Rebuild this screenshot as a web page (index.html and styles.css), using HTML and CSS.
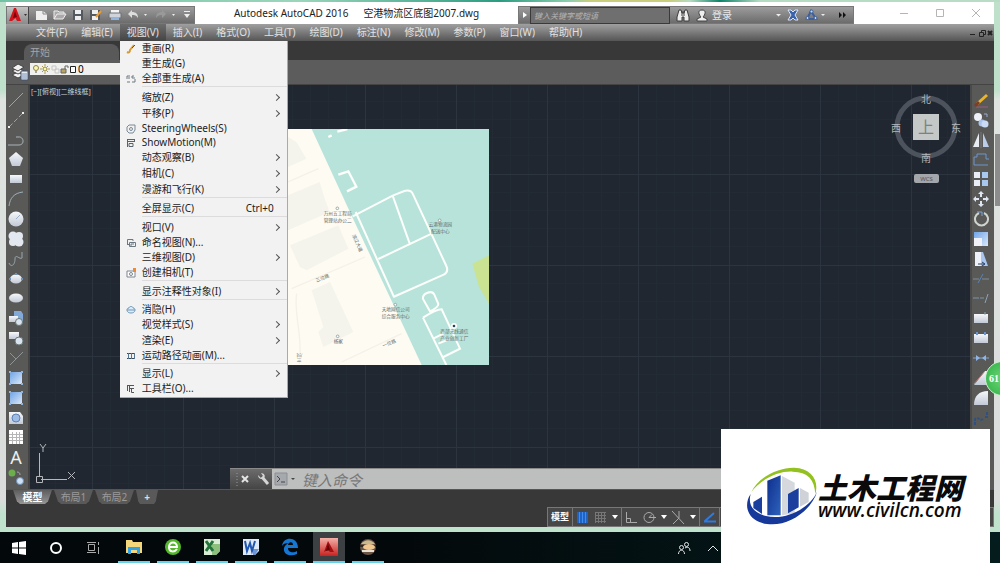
FILE: index.html
```html
<!DOCTYPE html>
<html lang="zh-CN">
<head>
    <meta charset="UTF-8">
    <meta name="viewport" content="width=device-width, initial-scale=1.0">
    <title>Autodesk AutoCAD 2016 空港物流区底图2007.dwg</title>
    <link rel="stylesheet" href="styles.css">
</head>
<body>
    <!-- Shared gradients -->
    <svg class="defs" width="0" height="0" aria-hidden="true">
        <defs>
            <linearGradient id="pale" x1="0" y1="0" x2="0" y2="1"><stop offset="0" stop-color="#f6f8fb"/><stop offset="1" stop-color="#c2c9d6"/></linearGradient>
            <linearGradient id="sky" x1="0" y1="0" x2="1" y2="1"><stop offset="0" stop-color="#6fa4e6"/><stop offset="1" stop-color="#dbe8fa"/></linearGradient>
            <linearGradient id="red" x1="0" y1="0" x2="0" y2="1"><stop offset="0" stop-color="#f3b0a8"/><stop offset="1" stop-color="#c9221f"/></linearGradient>
            <linearGradient id="tower" x1="0" y1="0" x2="1" y2="1"><stop offset="0" stop-color="#0f2f8c"/><stop offset="1" stop-color="#2d62bd"/></linearGradient>
        </defs>
    </svg>

    <div class="desktop">
        <div class="window">
            <!-- Title Bar -->
            <header class="titlebar">
                <div class="quick-access">
                    <button class="app-btn" aria-label="应用程序菜单"><svg width="20" height="16" viewBox="0 0 20 16"><path d="M1 14 6 1h2l5 13H9L7.500 11 4 14z" fill="#d3131b"/><path d="m7 4 2 6-4 1z" fill="#7c060b"/><path d="M16 7h3l-1.500 2z" fill="#333"/></svg></button>
                    <button aria-label="新建"><svg width="14" height="12" viewBox="0 0 14 12"><path d="M2 2h7l4 3v6H2z" fill="#eee"/><path d="M9 2v3h4" fill="none" stroke="#888"/></svg></button>
                    <button aria-label="打开"><svg width="14" height="12" viewBox="0 0 14 12"><path d="M1 10V2h4l1 1h5v2M1 10l3-5h9l-3 5z" fill="#aaa" stroke="#eee"/></svg></button>
                    <button aria-label="保存"><svg width="12" height="12" viewBox="0 0 12 12"><path d="M1 1h10v10H1z" fill="#54585f"/><path d="M3 1h6v4H3zM3 7h6v4H3z" fill="#eee"/></svg></button>
                    <button aria-label="另存为"><svg width="14" height="12" viewBox="0 0 14 12"><path d="M1 1h10v10H1z" fill="#54585f"/><path d="M3 1h6v4H3zM3 7h6v4H3z" fill="#eee"/><path d="m7 8 5-6" stroke="#e99a35" stroke-width="2"/></svg></button>
                    <button aria-label="打印"><svg width="14" height="12" viewBox="0 0 14 12"><path d="M3 1h8v4H3z" fill="#f4f4f4"/><path d="M1 4h12v5H1z" fill="#d0d4da" stroke="#6d7177"/><path d="M3 8h8v3H3z" fill="#8fb4dd"/></svg></button>
                    <button aria-label="放弃"><svg width="23" height="12" viewBox="0 0 23 12"><path d="m1 5 4-4v2c4 0 6 2 6 6-2-3-3-3-6-3v3z" fill="#ddd"/><path d="M17 5h3l-1.500 2z" fill="#eee"/></svg></button>
                    <button aria-label="重做"><svg width="23" height="12" viewBox="0 0 23 12"><path d="M11 5 7 1v2C3 3 1 5 1 9c2-3 3-3 6-3v3z" fill="#999"/><path d="M17 5h3l-1.500 2z" fill="#eee"/></svg></button>
                    <button aria-label="自定义"><svg width="8" height="10" viewBox="0 0 8 10"><path d="M1 1.500h6" stroke="#eee"/><path d="M1 4h6L4 8z" fill="#eee"/></svg></button>
                </div>
                <h1 class="title"><span>Autodesk AutoCAD 2016</span><span>空港物流区底图2007.dwg</span></h1>
                <div class="infocenter">
                    <button class="expand" aria-label="展开"><svg width="6" height="8" viewBox="0 0 6 8"><path d="m1 1 4 3-4 3z" fill="#fff"/></svg></button>
                    <input class="search" type="text" aria-label="搜索" placeholder="键入关键字或短语">
                    <button aria-label="查找"><svg width="14" height="13" viewBox="0 0 14 13"><path d="M3 1h2l1 3h2l1-3h2l2 7v4H8V8H6v4H1V8z" fill="#eee" stroke="#3c3c3c"/><path d="M6 2v5M8 2v5" stroke="#3c3c3c"/></svg></button>
                    <button class="login"><svg width="12" height="13" viewBox="0 0 12 13"><path d="M6 1c5 0 3 5 1 7l4 2v2H1v-2l4-2C3 6 1 1 6 1z" fill="#eee" stroke="#444"/></svg>登录</button>
                    <button class="login-more" aria-label="登录选项"><svg width="5" height="4" viewBox="0 0 5 4"><path d="M0 1h5L2.500 3.500z" fill="#eee"/></svg></button>
                    <button aria-label="交换"><svg width="12" height="12" viewBox="0 0 12 12"><path d="M1 1h3l2 2 2-2h3L8 6l3 5H8L6 9l-2 2H1l3-5z" fill="#3b62ad" stroke="#dce6f5"/></svg></button>
                    <button aria-label="连接"><svg width="20" height="12" viewBox="0 0 20 12"><path d="M6 2 2 10h9z" fill="none" stroke="#3d5f9c" stroke-width="2"/><g fill="#c9d9f2" stroke="#3d5f9c"><circle cx="6.500" cy="2.500" r="1.500"/><circle cx="2.500" cy="9" r="1.500"/><circle cx="10.500" cy="9" r="1.500"/></g><path d="M16 5h4l-2 2z" fill="#eee"/></svg></button>
                    <button class="more" aria-label="更多"><svg width="7" height="6" viewBox="0 0 7 6"><path d="m0 0 3 3-3 3zM4 0l3 3-3 3z" fill="#111"/></svg></button>
                </div>
                <div class="window-btns">
                    <button aria-label="最小化"><svg width="10" height="10" viewBox="0 0 10 10"><path d="M1 5.500h8" stroke="#b5b5b5"/></svg></button>
                    <button aria-label="最大化"><svg width="10" height="10" viewBox="0 0 10 10"><path d="M1.500 1.500h7v7h-7z" fill="none" stroke="#b5b5b5"/></svg></button>
                    <button aria-label="关闭"><svg width="10" height="10" viewBox="0 0 10 10"><path d="m1 1 8 8M9 1 1 9" stroke="#b5b5b5"/></svg></button>
                </div>
            </header>

            <!-- Menu Bar -->
            <nav class="menubar">
                <a href="#">文件(F)</a>
                <a href="#">编辑(E)</a>
                <div class="menu-open">
                    <a href="#" class="active">视图(V)</a>
                    <ul class="dropdown">
                        <li><a href="#"><svg width="10" height="10" viewBox="0 0 10 10"><path d="M1 8c2 1 3 0 3-2l4-5" fill="none" stroke="#d79a35" stroke-width="2"/><path d="m6 4 3-3" stroke="#555"/></svg><span>重画(R)</span></a></li>
                        <li><a href="#"><i></i><span>重生成(G)</span></a></li>
                        <li><a href="#"><svg width="10" height="10" viewBox="0 0 10 10"><path d="M1 5V2h3M2 4h2M9 5v3H6M8 2H6v2h3M1 8h3" fill="none" stroke="#6c7880"/></svg><span>全部重生成(A)</span></a></li>
                        <li class="divider"></li>
                        <li class="tall sub"><a href="#"><i></i><span>缩放(Z)</span></a></li>
                        <li class="tall sub"><a href="#"><i></i><span>平移(P)</span></a></li>
                        <li class="short"><a href="#"><svg width="10" height="10" viewBox="0 0 10 10"><path d="M3 1h6v5L7 9H3L1 7V3z" fill="none" stroke="#7a8a96"/><circle cx="5" cy="5" r="1.500" fill="none" stroke="#7a8a96"/></svg><span>SteeringWheels(S)</span></a></li>
                        <li class="short"><a href="#"><svg width="10" height="10" viewBox="0 0 10 10"><path d="M1 1.500h8M1.500 1v8M1 3.500h8M8.500 1v3M3 5.500h4v3H3z" fill="none" stroke="#59636b"/></svg><span>ShowMotion(M)</span></a></li>
                        <li class="tall sub"><a href="#"><i></i><span>动态观察(B)</span></a></li>
                        <li class="tall sub"><a href="#"><i></i><span>相机(C)</span></a></li>
                        <li class="tall sub"><a href="#"><i></i><span>漫游和飞行(K)</span></a></li>
                        <li class="divider"></li>
                        <li class="tall"><a href="#"><i></i><span>全屏显示(C)</span><kbd>Ctrl+0</kbd></a></li>
                        <li class="divider"></li>
                        <li class="tall sub"><a href="#"><i></i><span>视口(V)</span></a></li>
                        <li><a href="#"><svg width="10" height="10" viewBox="0 0 10 10"><path d="M1.500 7V1.500H7V3M1 6.500h2M3.500 4.500h6v4h-6zM5 8V6h3" fill="none" stroke="#6c7880"/></svg><span>命名视图(N)...</span></a></li>
                        <li class="sub"><a href="#"><i></i><span>三维视图(D)</span></a></li>
                        <li><a href="#"><svg width="10" height="10" viewBox="0 0 10 10"><path d="M1 3h8v6H1z" fill="#fff" stroke="#7b8790"/><circle cx="5" cy="6" r="1.500" fill="none" stroke="#7b8790"/><path d="M7 0h3v4H7z" fill="#ee8a35"/></svg><span>创建相机(T)</span></a></li>
                        <li class="divider"></li>
                        <li class="tall sub"><a href="#"><i></i><span>显示注释性对象(I)</span></a></li>
                        <li class="divider"></li>
                        <li><a href="#"><svg width="10" height="10" viewBox="0 0 10 10"><path d="M3 3c0-2 4-2 4 0 3 0 3 5-2 5S0 3 3 3zM1 5h8" fill="#dcecf8" stroke="#6f97b8"/></svg><span>消隐(H)</span></a></li>
                        <li class="sub"><a href="#"><i></i><span>视觉样式(S)</span></a></li>
                        <li class="tall sub"><a href="#"><i></i><span>渲染(E)</span></a></li>
                        <li><a href="#"><svg width="10" height="10" viewBox="0 0 10 10"><path d="M1 2.500h8M1 7.500h8" stroke="#37485a"/><path d="M2.500 2v6M5.500 2v6M8.500 2v6" stroke="#5a7791"/></svg><span>运动路径动画(M)...</span></a></li>
                        <li class="divider"></li>
                        <li class="sub"><a href="#"><i></i><span>显示(L)</span></a></li>
                        <li><a href="#"><svg width="10" height="10" viewBox="0 0 10 10"><path d="M1.500 1v6M3.500 1v7M1 1.500h7M4 4.500h4M5.500 4v4.500H8" fill="none" stroke="#555"/></svg><span>工具栏(O)...</span></a></li>
                    </ul>
                </div>
                <a href="#">插入(I)</a>
                <a href="#">格式(O)</a>
                <a href="#">工具(T)</a>
                <a href="#">绘图(D)</a>
                <a href="#">标注(N)</a>
                <a href="#">修改(M)</a>
                <a href="#">参数(P)</a>
                <a href="#">窗口(W)</a>
                <a href="#">帮助(H)</a>
                <div class="doc-btns">
                    <svg width="24" height="8" viewBox="0 0 24 8" fill="none" stroke="#222"><path d="M1 5.500h5M10.500 3.500h4v4h-4zM12.500 3V1.500h4v4h-2"/><path d="m19 2 4 4M23 2l-4 4" stroke-width="2"/></svg>
                </div>
            </nav>

            <div class="file-tabs"><a href="#" class="file-tab">开始</a></div>

            <!-- Layer Toolbar -->
            <div class="layer-bar">
                <button aria-label="图层特性"><svg width="18" height="18" viewBox="0 0 18 18"><g fill="#f2f2f2" stroke="#444"><path d="m1 12 6-3 6 3-6 3z"/><path d="m1 8 6-3 6 3-6 3z"/><path d="m1 5 6-4 6 3-6 4z"/></g><path d="M10 8h7v9h-7z" fill="#e8edf5" stroke="#44556e"/><path d="M11 11h5M11 13h5M11 15h5" stroke="#7890b5"/></svg></button>
                <div class="layer-box">
                    <svg width="44" height="10" viewBox="0 0 44 10"><circle cx="4" cy="4" r="2.500" fill="#fdf7b5" stroke="#8d8448"/><path d="M3 8h2" stroke="#555"/><circle cx="13" cy="5" r="2" fill="#fff6a0" stroke="#8d8448"/><path d="M13 0v2M13 8v2M8 5h2M16 5h2M10 2l1 1M16 8l-1-1M10 8l1-1M16 2l-1 1" stroke="#a89a50"/><path d="M20 2h4v4h-4zM23 5h4v4h-4z" fill="none" stroke="#c5c5c5"/><path d="M29 5h5v4h-5z" fill="#b9a561" stroke="#666"/><path d="M33 5V2h3v2" fill="none" stroke="#666"/><path d="M38.500 2.500h5v6h-5z" fill="#fff" stroke="#222"/></svg>
                    <select aria-label="图层"><option>0</option></select>
                </div>
            </div>

            <!-- Workspace -->
            <main class="workspace">
                <div class="tools">
                    <button aria-label="直线"><svg viewBox="0 0 16 16"><path d="M1 15 15 1" stroke="#95a5ac"/></svg></button>
                    <button aria-label="构造线"><svg viewBox="0 0 16 16"><path d="M1 15 15 1" stroke="#9aa5aa" stroke-dasharray="5 2"/><path d="M0 14h2v2H0zM14 0h2v2h-2z" fill="#eee"/></svg></button>
                    <button aria-label="多段线"><svg viewBox="0 0 16 16"><path d="M0 13h11c6 0 5-9-1-8H8" fill="none" stroke="#aab4ba"/></svg></button>
                    <button aria-label="多边形"><svg viewBox="0 0 16 16"><path d="m8 1 7 6-3 8H4L1 7z" fill="url(#pale)"/></svg></button>
                    <button aria-label="矩形"><svg viewBox="0 0 16 16"><path d="M2 4h12v8H2z" fill="url(#pale)"/></svg></button>
                    <button aria-label="圆弧"><svg viewBox="0 0 16 16"><path d="M1 15C2 7 6 2 15 1" fill="none" stroke="#9db0bb"/></svg></button>
                    <button aria-label="圆"><svg viewBox="0 0 16 16"><circle cx="8" cy="8" r="7.500" fill="url(#pale)"/><path d="m8 8 4-4" stroke="#9bb1cf"/></svg></button>
                    <button aria-label="修订云线"><svg viewBox="0 0 16 16"><g fill="#e3e7ef"><circle cx="5" cy="5" r="4.500"/><circle cx="11" cy="5" r="4"/><circle cx="5" cy="11" r="4"/><circle cx="11" cy="11" r="4.500"/></g></svg></button>
                    <button aria-label="样条曲线"><svg viewBox="0 0 16 16"><path d="M1 12c2 5 6 2 6-4s5 1 7-1V1" fill="none" stroke="#98a6ae"/></svg></button>
                    <button aria-label="椭圆"><svg viewBox="0 0 16 16"><ellipse cx="8" cy="8" rx="6" ry="4.500" fill="url(#pale)"/><path d="M1 8h2M13 8h2M8 2v2" stroke="#6d91b8" stroke-width="2"/></svg></button>
                    <button aria-label="椭圆弧"><svg viewBox="0 0 16 16"><ellipse cx="8" cy="8" rx="7" ry="4.500" fill="url(#pale)"/></svg></button>
                    <button aria-label="插入块"><svg viewBox="0 0 16 16"><path d="M6 1h7l2 3v7H6z" fill="#83a9d8"/><path d="M1 6h9v6H1z" fill="url(#pale)"/><circle cx="11" cy="12" r="3.500" fill="#dbe3ee" stroke="#677"/></svg></button>
                    <button aria-label="创建块"><svg viewBox="0 0 16 16"><path d="M1 2h10v7H1z" fill="url(#pale)"/><circle cx="11" cy="11" r="4" fill="#dbe3ee" stroke="#677"/></svg></button>
                    <button aria-label="点"><svg viewBox="0 0 16 16"><path d="M2 15 15 2M2 3l6 6" stroke="#8d9497"/></svg></button>
                    <button aria-label="图案填充"><svg viewBox="0 0 16 16"><path d="M2 2h12v12H2z" fill="url(#sky)"/><path d="M1 1h2v2H1zM13 1h2v2h-2zM1 13h2v2H1zM13 13h2v2h-2z" fill="#8fb3df"/></svg></button>
                    <button aria-label="渐变色"><svg viewBox="0 0 16 16"><path d="M2 2h12v12H2z" fill="url(#sky)"/><path d="M1 1h2v2H1zM13 1h2v2h-2zM1 13h2v2H1zM13 13h2v2h-2z" fill="#8fb3df"/></svg></button>
                    <button aria-label="面域"><svg viewBox="0 0 16 16"><path d="M1 2h11l3 4v8H1z" fill="url(#pale)"/><circle cx="8" cy="8" r="4" fill="#9ebce4" stroke="#5d82b8"/></svg></button>
                    <button aria-label="表格"><svg viewBox="0 0 16 16"><path d="M1 1h14v14H1z" fill="#fff"/><path d="M1 5.500h14M1 8.500h14M1 11.500h14M4.500 3v12M8.500 3v12M11.500 3v12" stroke="#b5b5b5"/></svg></button>
                    <button aria-label="多行文字" class="text-tool">A</button>
                    <button aria-label="添加选定对象"><svg viewBox="0 0 16 16"><circle cx="4" cy="4" r="3.500" fill="#6cae4c"/><circle cx="12" cy="12" r="3.500" fill="#cfe1f5" stroke="#6b8fb5"/><path d="M9 3c2 0 3 1 3 3" fill="none" stroke="#aaa"/></svg></button>
                </div>

                <div class="canvas">
                    <p class="viewport-label">[−][俯视][二维线框]</p>

                    <svg class="map" viewBox="9 26 603 708" role="img" aria-label="空港物流区底图">
                        <path d="M9 26h603v708H9z" fill="#b8e3db"/>
                        <path d="M9 26h71l120 260 210 448H9z" fill="#fdfbf2"/>
                        <g fill="#f5f4ec"><path d="M9 50l25 15 30 50-55 25zM9 225l95-40 15 50 15 40-125 55zM15 375l145-60 30 70-125 65-20-10zM80 510l55-25 70 150-90 45-15-45 15-15z"/></g>
                        <g fill="none" stroke="#f5f1e8" stroke-width="4"><path d="M9 185 100 145M20 505l220-95M170 725l180-85M35 520c-10 60 20 130 8 210"/></g>
                        <path d="m612 405-50 25 20 70 30 50z" fill="#c9e392"/>
                        <g fill="none" stroke="#fdfffa" stroke-width="6">
                            <path d="m203 288 120-62 35-14q20-5 26 10l100 215q8 18-8 26L325 530M212 275l115 255M323 226l52 146M280 416l160-76"/>
                            <path d="m160 163 30-10 24 46-28 14M130 50l10-5M157 34l30-8" stroke-width="7"/>
                            <path d="m414 536q-2-12 12-18 16-7 22 5l12 28q0 10-25 22zM414 592q40-25 56-25l55 118-50 25M414 592l70 142M445 655l35-18M460 670l30-12"/>
                        </g>
                        <g class="map-text" text-anchor="middle">
                            <text x="158" y="284">万州五工程局</text><text x="158" y="304">管理站办公二</text>
                            <text x="466" y="318">云港物流园</text><text x="466" y="338">配送中心</text>
                            <text x="332" y="572">天地网信公司</text><text x="332" y="592">综合服务中心</text>
                            <text x="508" y="638">西部无线通信</text><text x="508" y="658">产业创新工厂</text>
                            <text x="160" y="668">杨家</text>
                            <text x="112" y="478" transform="rotate(-22 112 472)">三位路</text>
                            <text x="312" y="674" transform="rotate(-22 312 668)">一位路</text>
                            <text x="218" y="374" transform="rotate(65 218 368)">滨江大道</text>
                            <text x="45" y="718" transform="rotate(90 45 712)">江川</text>
                        </g>
                        <g fill="#fff" stroke="#788" stroke-width="2"><circle cx="157" cy="264" r="4"/><circle cx="464" cy="300" r="4"/><circle cx="331" cy="553" r="4"/><circle cx="158" cy="648" r="4"/></g>
                        <circle cx="507" cy="617" r="9" fill="#fff"/><circle cx="507" cy="617" r="4" fill="#245"/>
                    </svg>

                    <!-- View cube -->
                    <div class="viewcube">
                        <svg width="70" height="70" viewBox="0 0 70 70"><circle cx="35" cy="35" r="29" fill="none" stroke="#4c535d" stroke-width="5"/></svg>
                        <span class="face">上</span>
                        <span class="north">北</span><span class="south">南</span><span class="west">西</span><span class="east">东</span>
                    </div>
                    <button class="wcs">WCS</button>

                    <svg class="ucs" width="44" height="42" viewBox="0 0 44 42" fill="none" stroke="#b4b8bc"><path d="M5.500 34V10M7 36.500h26M2.500 33.500h6v6h-6zM6 1l3 4 3-4M9 5v4M34 29l7 7M41 29l-7 7"/></svg>

                    <!-- Command line -->
                    <div class="command">
                        <div class="command-grip">
                            <svg width="36" height="16" viewBox="0 0 36 16"><path d="M2 2v13" stroke="#999" stroke-dasharray="1 2"/><path d="m7 5 6 6M13 5l-6 6" stroke="#e4e4e4" stroke-width="2"/><path d="m27 6 6 7" stroke="#d5d5d5" stroke-width="3"/><path d="M23 4c0 4 4 5 6 3s0-5-3-5l2 3-2 2z" fill="#d5d5d5"/></svg>
                        </div>
                        <svg width="22" height="14" viewBox="0 0 22 14"><path d="M1 1h12v12H1z" fill="#a5a9ae" stroke="#8b8f94"/><path d="m3 4 3 3-3 3M7 10h4" fill="none" stroke="#444"/><path d="M17 6h4l-2 2z" fill="#444"/></svg>
                        <input type="text" aria-label="命令行" placeholder="键入命令">
                    </div>
                </div>

                <div class="tools tools-right">
                    <button aria-label="删除"><svg viewBox="0 0 16 16"><path d="M3 15h12" stroke="#9a5a86"/><path d="m4 12 10-9" stroke="#e8b52d" stroke-width="3"/><path d="m2 14 4-4" stroke="#7c3f26" stroke-width="3"/></svg></button>
                    <button aria-label="复制"><svg viewBox="0 0 16 16"><circle cx="5" cy="5" r="4" fill="#eef1f7"/><circle cx="9" cy="11" r="3.500" fill="#a9c3ea"/><circle cx="12" cy="12" r="3.500" fill="#c9dbf5"/><path d="M11 2h3v3" fill="none" stroke="#9ac"/></svg></button>
                    <button aria-label="镜像"><svg viewBox="0 0 16 16"><path d="M6 1v14H0z" fill="#e9ecf2"/><path d="M10 1v14h6z" fill="#b9cdea"/><path d="M8 0v16" stroke="#777"/></svg></button>
                    <button aria-label="偏移"><svg viewBox="0 0 16 16"><path d="M1 14V6h3V3h9v5h3M1 14h14" fill="none" stroke="#6d95cb"/></svg></button>
                    <button aria-label="阵列"><svg viewBox="0 0 16 16"><path d="M1 1h6v6H1zM1 9h6v6H1z" fill="#e9edf5"/><path d="M9 1h6v6H9zM9 9h6v6H9z" fill="#a9c8f0"/></svg></button>
                    <button aria-label="移动"><svg viewBox="0 0 16 16"><path d="m8 0 3 3H9v3H7V3H5zM8 16l-3-3h2v-3h2v3h2zM0 8l3-3v2h3v2H3v2zM16 8l-3 3V9h-3V7h3V5z" fill="#dde6f2"/></svg></button>
                    <button aria-label="旋转"><svg viewBox="0 0 16 16"><path d="M6 2a6.500 6.500 0 1 0 5 0" fill="none" stroke="#cfd4cf" stroke-width="2"/><path d="M4 1h5v4" fill="none" stroke="#7da4d8"/></svg></button>
                    <button aria-label="缩放"><svg viewBox="0 0 16 16"><path d="M1 1h14v14H1z" fill="url(#sky)"/><path d="M1 7h8v8H1z" fill="#f0f2f7"/></svg></button>
                    <button aria-label="拉伸"><svg viewBox="0 0 16 16"><path d="M2 1h8l5 14H2z" fill="#a8c6ee"/><path d="M2 1h6v14H2z" fill="#eef1f7"/><path d="M5 13h6M9 11l3 2-3 2" fill="none" stroke="#2c3e63"/></svg></button>
                    <button aria-label="修剪"><svg viewBox="0 0 16 16"><path d="M0 8h6M9 8h7" stroke="#7f8a98"/><path d="m5 12 5-9" stroke="#5b82b5"/></svg></button>
                    <button aria-label="延伸"><svg viewBox="0 0 16 16"><path d="M0 8h11" stroke="#7f93a8" stroke-dasharray="6 1"/><path d="m12 13 3-9" stroke="#8fa1b5"/></svg></button>
                    <button aria-label="打断于点"><svg viewBox="0 0 16 16"><path d="M1 4h14v9H1z" fill="url(#pale)"/><path d="M12 2v3" stroke="#8ab"/></svg></button>
                    <button aria-label="打断"><svg viewBox="0 0 16 16"><path d="M1 4h14v9H1z" fill="url(#pale)"/><path d="M4 2v3M12 2v3" stroke="#6d95cb" stroke-width="2"/></svg></button>
                    <button aria-label="合并"><svg viewBox="0 0 16 16"><path d="M0 8h16" stroke="#7fa3d2"/><path d="m3 5 4 3-4 3zM13 5 9 8l4 3z" fill="#8fb5e8"/></svg></button>
                    <button aria-label="倒角"><svg viewBox="0 0 16 16"><path d="M1 15 12 1h3v14z" fill="url(#pale)"/><path d="M1 14 12 1" stroke="#b77"/></svg></button>
                    <button aria-label="圆角"><svg viewBox="0 0 16 16"><path d="M1 15C1 6 6 1 15 1v14z" fill="url(#pale)"/></svg></button>
                    <button aria-label="光顺曲线"><svg viewBox="0 0 16 16"><path d="M2 15V9c5-3 4 3 8 0M14 2v5h-3" fill="none" stroke="#31517c" stroke-width="2" stroke-dasharray="3 1"/></svg></button>
                </div>
            </main>

            <!-- Layout tabs and status bar -->
            <footer class="bottom">
                <div class="layout-tabs">
                    <a href="#" class="active">模型</a>
                    <a href="#">布局1</a>
                    <a href="#">布局2</a>
                    <a href="#" class="plus">+</a>
                </div>
                <div class="statusbar">
                    <button class="model">模型</button>
                    <div class="status-group">
                        <button aria-label="栅格"><svg width="13" height="13" viewBox="0 0 13 13"><path d="M1 1h11v11H1z" fill="#1f63c4"/><path d="M3.500 1v11M6.500 1v11M9.500 1v11" stroke="#3f8cf0"/></svg></button>
                        <button aria-label="捕捉"><svg width="13" height="13" viewBox="0 0 13 13"><path d="M1 1.500h11M1 4.500h11M1 7.500h11M1 10.500h11" stroke="#777"/><path d="M1.500 1v11M4.500 1v11M7.500 1v11M10.500 1v11" stroke="#777"/></svg></button>
                        <button aria-label="捕捉设置"><svg width="6" height="4" viewBox="0 0 6 4"><path d="M0 0h6L3 4z" fill="#fff"/></svg></button>
                    </div>
                    <div class="status-group">
                        <button aria-label="正交"><svg width="13" height="13" viewBox="0 0 13 13"><path d="M1.500 1v10.500H12M1 7.500h4.500V11" fill="none" stroke="#aaa"/></svg></button>
                        <button aria-label="极轴"><svg width="13" height="13" viewBox="0 0 13 13"><circle cx="6" cy="6.500" r="5" fill="none" stroke="#aaa"/><path d="M6 6.500h7M6 6.500l3-3" stroke="#aaa"/></svg></button>
                        <button aria-label="极轴设置"><svg width="6" height="4" viewBox="0 0 6 4"><path d="M0 0h6L3 4z" fill="#fff"/></svg></button>
                        <button aria-label="等轴测"><svg width="13" height="15" viewBox="0 0 13 15"><path d="m0 1 12 13M7 1v7M7 8l-6 6" fill="none" stroke="#aaa"/></svg></button>
                        <button aria-label="等轴测设置"><svg width="6" height="4" viewBox="0 0 6 4"><path d="M0 0h6L3 4z" fill="#fff"/></svg></button>
                    </div>
                    <div class="status-group">
                        <button aria-label="对象捕捉追踪"><svg width="13" height="13" viewBox="0 0 13 13"><path d="M1 10.500h12M2 10l9-8" stroke="#2b7be4" stroke-width="2"/></svg></button>
                    </div>
                </div>
            </footer>
        </div>
    </div>

    <!-- Taskbar -->
    <div class="taskbar">
        <button class="plain" aria-label="开始"><svg width="14" height="14" viewBox="0 0 14 14"><path d="m0 2 6-1v5.500H0zM7 1l7-1v6.500H7zM0 7.500h6V13l-6-1zM7 7.500h7V14l-7-1z" fill="#fff"/></svg></button>
        <button class="plain" aria-label="搜索"><svg width="14" height="14" viewBox="0 0 14 14"><circle cx="7" cy="7" r="5" fill="none" stroke="#fff" stroke-width="2"/></svg></button>
        <button class="plain" aria-label="任务视图"><svg width="14" height="14" viewBox="0 0 14 14"><path d="M2.500 3.500h6v6h-6zM1 1.500h9M1 11.500h9M12.500 1v3M12.500 6v7" fill="none" stroke="#aaa"/></svg></button>
        <div class="apps">
            <button aria-label="文件资源管理器"><svg width="18" height="16" viewBox="0 0 18 16"><path d="M1 1h6l1 2h9v11H1z" fill="#f5d77b"/><path d="M3 15V8h12v7h-3v-4H6v4z" fill="#2fa2e8"/></svg></button>
            <button aria-label="360浏览器"><svg width="18" height="18" viewBox="0 0 18 18"><circle cx="9" cy="9" r="8" fill="#55b82c"/><path d="M5 9h8c0-6-8-6-8 0s6 5 8 2" fill="none" stroke="#fff" stroke-width="2"/></svg></button>
            <button aria-label="Excel"><svg width="18" height="18" viewBox="0 0 18 18"><path d="M1 1h16v12l-4 4H1z" fill="#d9ecd4"/><path d="M9 6h8v7l-4 4H9z" fill="#8cc07c"/><path d="m3 3 7 10M10 3 3 13" stroke="#23743a" stroke-width="3"/></svg></button>
            <button aria-label="Word"><svg width="18" height="18" viewBox="0 0 18 18"><path d="M1 1h16v12l-4 4H1z" fill="#dfe8f7"/><path d="M11 11h6l-4 6h-2z" fill="#6c96d6"/><path d="m3 3 2 10 3-8 2 8 3-10" fill="none" stroke="#1f56b0" stroke-width="2"/></svg></button>
            <button aria-label="Edge"><svg width="18" height="18" viewBox="0 0 18 18"><path d="M1 8C2-2 17-2 17 10H7c0 5 6 5 9 3v3C10 19 2 17 3 10c1-3 3-4 5-5-4 0-6 1-7 3zM7 7h5c0-4-5-3-5 0z" fill="#1577d3"/></svg></button>
            <button class="active" aria-label="AutoCAD"><svg width="18" height="18" viewBox="0 0 18 18"><path d="M0 0h18v18H0z" fill="url(#red)"/><path d="m8 3 6 11h-4l-2-2-4 2z" fill="#a50f12"/><path d="m8 6 2 6-4 1z" fill="#5f0406"/></svg></button>
            <button aria-label="游戏"><svg width="18" height="18" viewBox="0 0 18 18"><circle cx="9" cy="9" r="8" fill="#6b5445"/><path d="M2 6c4-5 10-5 14 0z" fill="#c9b98e"/><path d="M1 7h16v2H1z" fill="#2f2620"/><ellipse cx="10" cy="9" rx="6" ry="3" fill="#f0c88f"/><path d="M3 13h12" stroke="#e8e2d4" stroke-width="2"/></svg></button>
        </div>
        <div class="tray">
            <svg width="14" height="14" viewBox="0 0 14 14" fill="none" stroke="#e6e6e6"><circle cx="4.500" cy="6.500" r="2"/><path d="M1.500 13c0-5 6-5 6 0"/><circle cx="9.500" cy="3.500" r="2"/><path d="M8 7c3-2 5 0 5 3"/></svg>
            <svg width="12" height="8" viewBox="0 0 12 8" fill="none" stroke="#e6e6e6"><path d="m1 7 5-5 5 5"/></svg>
        </div>
    </div>

    <div class="speed-ball">61</div>

    <!-- Site badge -->
    <div class="site-badge">
        <svg width="72" height="60" viewBox="0 0 216 180"><path d="M22 108 48 92v52l-26-18z" fill="#1a3f9c"/><path d="m64 44 40-16v120H64z" fill="url(#tower)"/><path d="m108 30 38 20v92l-38 6z" fill="#d5d8dc"/><path d="m126 84 32-18v58l-32 18z" fill="#1a3f9c"/><path d="m162 66 26 14v28l-26 14z" fill="#cfd3d8"/><path d="M16 78C40 30 100 4 145 5c50 3 75 35 63 80-2-45-23-67-68-68C100 15 50 35 16 78z" fill="#93c120"/><path d="M14 84C-4 110-2 150 40 168c70 27 155-28 174-93-19 50-94 90-154 75-40-10-55-35-46-66z" fill="#15389a"/></svg>
        <div class="site-text">
            <strong>土木工程网</strong>
            <span>www.civilcn.com</span>
        </div>
    </div>
</body>
</html>
```

FILE: styles.css
```css
* {
    box-sizing: border-box;
}

body {
    margin: 0;
    position: relative;
    display: flex;
    flex-direction: column;
    min-height: 100vh;
    overflow: hidden;
    font-family: "Noto Sans", "Noto Sans CJK SC", sans-serif;
    font-size: 10px;
    line-height: 14px;
    background-color: #03090b;
}

a {
    color: inherit;
    text-decoration: none;
}

button {
    display: flex;
    align-items: center;
    justify-content: center;
    padding: 0;
    border: none;
    background: none;
    color: inherit;
    font: inherit;
}

svg {
    display: block;
    flex-shrink: 0;
}

.defs {
    position: absolute;
}

.desktop {
    flex: 1;
    display: flex;
    padding: 2px 6px 5px;
    background:
        linear-gradient(90deg, #6fc3a4, #9bd6bb 30%, #2c9c80 50%, #8fcfb0 57%, #c9cf7c 59%, #c9cf7c 67%, #b5dcc3 69%, #0c8468 72%, #b5dcc3 76%, #b9dcc6) top / 100% 2px no-repeat,
        linear-gradient(#8c8c8c, #8c8c8c) right 134px / 5px 72px no-repeat,
        linear-gradient(#bfe0cb 90px, #dfe3e0 100px, #d9dcda 500px, #bfe3cd 515px);
}

.window {
    flex: 1;
    display: flex;
    flex-direction: column;
    min-width: 0;
    background-color: #383838;
}

/* Title bar */
.titlebar {
    display: flex;
    height: 22px;
    padding-top: 4px;
    background-color: #fff;
}

.quick-access,
.infocenter {
    display: flex;
    align-items: center;
    background: linear-gradient(#9c9c9c, #6c6c6c);
    border: 1px solid #777;
}

.quick-access {
    gap: 5px;
    padding-right: 3px;
}

.app-btn {
    width: 22px;
    height: 17px;
    background: linear-gradient(#c4c4c4, #8a8a8a);
    border-right: 1px solid #444;
}

.title {
    flex: 1;
    display: flex;
    justify-content: center;
    gap: 15px;
    margin: 0;
    font-size: 10px;
    font-weight: normal;
    color: #222;
    white-space: nowrap;
}

.infocenter {
    gap: 6px;
    color: #e8e8e8;
}

.expand {
    width: 11px;
}

.search {
    width: 140px;
    height: 17px;
    margin-left: -6px;
    padding: 0 3px;
    border: 1px solid #3a3a3a;
    background-color: #6f6f6f;
    color: #ddd;
    font: italic 8px "Noto Sans", "Noto Sans CJK SC", sans-serif;
}

.search::placeholder {
    color: #b4b4b4;
}

.login {
    gap: 4px;
}

.login-more {
    margin-left: 38px;
}

.more {
    width: 22px;
}

.window-btns {
    display: flex;
    padding-left: 32px;
}

.window-btns button {
    width: 36px;
    height: 14px;
}

/* Menu bar */
.menubar {
    display: flex;
    height: 17px;
    padding-left: 23px;
    line-height: 17px;
    color: #e2e2e2;
    background: linear-gradient(#a0a0a0, #555);
    white-space: nowrap;
}

.menubar > a,
.menu-open > a {
    display: block;
    padding: 0 7px;
}

.menu-open {
    position: relative;
}

.menubar .active {
    background: linear-gradient(#6d6d6d, #444);
}

.doc-btns {
    margin-left: auto;
    padding: 5px 1px;
}

.dropdown {
    position: absolute;
    z-index: 5;
    top: 100%;
    left: 0;
    width: 168px;
    margin: 0;
    padding: 0 0 1px;
    list-style: none;
    color: #1c1c1c;
    background-color: #f2f2f2;
    border-right: 1px solid #aaa;
    border-bottom: 1px solid #aaa;
}

.dropdown a {
    display: grid;
    grid-template-columns: 10px 1fr auto;
    gap: 6px;
    align-items: center;
    height: 15px;
    padding: 0 6px;
    line-height: 15px;
}

.dropdown .tall a {
    height: 16px;
}

.dropdown .short a {
    height: 14px;
}

.dropdown kbd {
    padding-right: 7px;
    font: inherit;
}

.dropdown .sub a::after {
    content: "";
    width: 4px;
    height: 4px;
    margin-right: 2px;
    border-top: 1px solid #555;
    border-right: 1px solid #555;
    transform: rotate(45deg);
}

.divider {
    height: 3px;
    margin-left: 22px;
    border-top: 1px solid #dcdcdc;
}

/* File tabs and layer toolbar */
.file-tabs {
    height: 19px;
    padding: 3px 18px 0;
}

.file-tab {
    display: block;
    width: 95px;
    height: 16px;
    padding-left: 6px;
    line-height: 16px;
    color: #a5a5a5;
    background-color: #595959;
    border-radius: 8px 8px 0 0;
}

.layer-bar {
    display: flex;
    gap: 1px;
    height: 25px;
    padding: 3px 5px;
    background-color: #5c5c5c;
    border-bottom: 1px solid #444;
}

.layer-box {
    display: flex;
    align-items: center;
    width: 150px;
    height: 12px;
    padding-left: 2px;
    background-color: #f0f0ee;
}

.layer-box select {
    flex: 1;
    padding: 0 2px;
    border: none;
    appearance: none;
    background: none;
    font: inherit;
}

/* Workspace */
.workspace {
    flex: 1;
    display: flex;
    min-height: 0;
}

.tools {
    display: grid;
    grid-template-rows: repeat(20, 1fr);
    width: 24px;
    padding: 5px 4px 2px 2px;
    background-color: #595a58;
    border-right: 2px solid #444;
}

.tools button {
    min-height: 0;
}

.tools svg {
    width: 16px;
    height: 16px;
}

.tools-right {
    padding: 5px 5px 2px 1px;
    border-right: none;
    border-left: 2px solid #4a4a4a;
}

.text-tool {
    color: #eee;
    font-size: 18px;
    line-height: 18px;
}

.canvas {
    flex: 1;
    position: relative;
    background-color: #202731;
    background-image:
        linear-gradient(90deg, #2b343f 1px, transparent 1px),
        linear-gradient(#2b343f 1px, transparent 1px),
        linear-gradient(90deg, transparent 18px, #222a34 18px 19px, transparent 19px 36px, #222a34 36px 37px, transparent 37px 54px, #222a34 54px 55px, transparent 55px 72px, #222a34 72px 73px, transparent 73px),
        linear-gradient(transparent 18px, #222a34 18px 19px, transparent 19px 36px, #222a34 36px 37px, transparent 37px 54px, #222a34 54px 55px, transparent 55px 72px, #222a34 72px 73px, transparent 73px);
    background-size: 91px 91px;
    background-position: 62px 89px;
}

.viewport-label {
    margin: 0;
    padding-left: 1px;
    font-size: 7px;
    color: #d0d0d0;
}

.map {
    position: absolute;
    left: 258px;
    top: 44px;
    width: 201px;
    height: 236px;
}

.map-text {
    font-size: 14px;
    fill: #5f6a6a;
}

.viewcube {
    position: absolute;
    top: 7px;
    right: 9px;
    width: 70px;
    height: 70px;
    color: #b3b7bb;
}

.viewcube span {
    position: absolute;
}

.viewcube .face {
    top: 22px;
    left: 22px;
    width: 26px;
    height: 26px;
    font-size: 16px;
    line-height: 26px;
    text-align: center;
    color: #7c8282;
    background-color: #c4c8c6;
}

.north {
    top: 0;
    left: 30px;
}

.south {
    bottom: -3px;
    left: 30px;
}

.west {
    top: 29px;
    left: 0;
}

.east {
    top: 29px;
    right: 0;
}

.wcs {
    position: absolute;
    top: 89px;
    right: 31px;
    width: 25px;
    height: 9px;
    border-radius: 2px;
    color: #555;
    background-color: #a3a6ab;
    font-size: 6px;
    line-height: 8px;
}

.ucs {
    position: absolute;
    left: 4px;
    bottom: 4px;
}

.command {
    position: absolute;
    right: 0;
    bottom: 0;
    left: 200px;
    display: flex;
    align-items: center;
    gap: 6px;
    height: 21px;
    background-color: #bdbebe;
    border-top: 1px solid #8a8a8a;
}

.command-grip {
    display: flex;
    align-items: center;
    height: 20px;
    margin-right: -4px;
    padding: 0 1px 0 5px;
    background: linear-gradient(#6c6c6c, #454545);
}

.command input {
    flex: 1;
    height: 20px;
    padding: 0;
    border: none;
    background: none;
    font: italic 15px "Noto Sans CJK SC", sans-serif;
}

.command input::placeholder {
    color: #777;
}

/* Layout tabs and status bar */
.bottom {
    height: 38px;
    border-top: 1px solid #555;
}

.layout-tabs {
    display: flex;
    gap: 2px;
    height: 17px;
    padding-left: 7px;
    color: #999;
    line-height: 15px;
    text-align: center;
}

.layout-tabs a {
    width: 39px;
    height: 14px;
    background-color: #595959;
    clip-path: polygon(0 0, 100% 0, 90% 80%, 82% 100%, 18% 100%, 10% 80%);
}

.layout-tabs .active {
    color: #fff;
    font-weight: bold;
    background: linear-gradient(#5d5d5d, #969696);
}

.layout-tabs .plus {
    width: 22px;
    color: #ddd;
    font-weight: bold;
}

.statusbar {
    display: flex;
    width: 447px;
    height: 20px;
    margin-left: auto;
    background-color: #474747;
    border: 1px solid #777;
}

.model {
    width: 25px;
    color: #fff;
    font-size: 9px;
    font-weight: bold;
    border-right: 1px solid #777;
}

.status-group {
    display: flex;
    align-items: center;
    gap: 5px;
    padding: 0 3px;
    border-right: 1px solid #777;
}

/* Taskbar */
.taskbar {
    display: flex;
    height: 31px;
    background: linear-gradient(90deg, #03090b 40%, #041c1d);
}

.plain {
    width: 37px;
}

.apps {
    display: flex;
    gap: 7px;
    padding-left: 7px;
}

.apps button {
    width: 32px;
    border-bottom: 2px solid #66d3ea;
}

.apps .active {
    background-color: #3c4043;
}

.tray {
    display: flex;
    align-items: center;
    gap: 16px;
    margin-left: auto;
    padding-right: 281px;
}

.speed-ball {
    position: absolute;
    top: 361px;
    right: -20px;
    width: 35px;
    height: 35px;
    padding-left: 3px;
    border: 1px solid #cdeccf;
    border-radius: 50%;
    color: #fff;
    background: radial-gradient(#6bd474, #2fb045);
    font: bold 10px/34px "Liberation Serif", serif;
}

.site-badge {
    position: absolute;
    z-index: 10;
    right: 10px;
    bottom: 0;
    display: flex;
    align-items: center;
    width: 269px;
    height: 134px;
    padding-left: 25px;
    color: #0a0a0a;
    background-color: #fff;
}

.site-text {
    display: flex;
    flex-direction: column;
}

.site-text strong {
    font: italic 900 29px/28px "Noto Sans CJK SC", sans-serif;
}

.site-text span {
    font: italic 600 19px/20px "Open Sans", sans-serif;
}
```
